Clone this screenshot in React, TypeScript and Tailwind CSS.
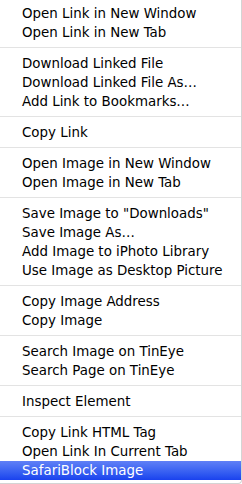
const groups: string[][] = [
  ['Open Link in New Window', 'Open Link in New Tab'],
  ['Download Linked File', 'Download Linked File As…', 'Add Link to Bookmarks…'],
  ['Copy Link'],
  ['Open Image in New Window', 'Open Image in New Tab'],
  ['Save Image to "Downloads"', 'Save Image As…', 'Add Image to iPhoto Library', 'Use Image as Desktop Picture'],
  ['Copy Image Address', 'Copy Image'],
  ['Search Image on TinEye', 'Search Page on TinEye'],
  ['Inspect Element'],
  ['Copy Link HTML Tag', 'Open Link In Current Tab', 'SafariBlock Image'],
];

const HIGHLIGHTED = 'SafariBlock Image';

export default function App() {
  return (
    <div className="w-[242px] h-[484px] bg-white overflow-hidden">
      <div
        className="w-[242px] h-[484px] bg-white border-r border-b border-[#d4d4d4] pt-[4px] rounded-br-[4px] text-[13.4px] text-black"
        style={{ fontFamily: '"DejaVu Sans", Verdana, sans-serif' }}
      >
        {groups.map((group, gi) => (
          <div key={gi}>
            {gi > 0 && (
              <div className="pt-[5px] pb-[6px]">
                <div className="h-px bg-[#e3e3e3]" />
              </div>
            )}
            {group.map((label) => (
              <div
                key={label}
                className={
                  label === HIGHLIGHTED
                    ? 'h-[19px] flex items-center pl-[22px] text-white bg-gradient-to-b from-[#6080f6] to-[#1a41ee]'
                    : 'h-[19px] flex items-center pl-[22px]'
                }
              >
                <span className="leading-none whitespace-nowrap">{label}</span>
              </div>
            ))}
          </div>
        ))}
      </div>
    </div>
  );
}
